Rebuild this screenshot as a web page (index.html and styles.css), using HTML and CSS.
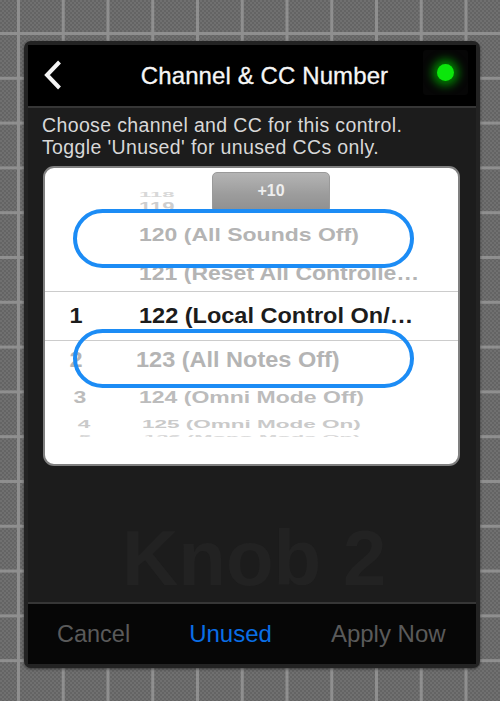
FILE: index.html
```html
<!DOCTYPE html>
<html lang="en">
<head>
<meta charset="utf-8">
<title>Channel &amp; CC Number</title>
<link rel="stylesheet" href="styles.css">
</head>
<body>
<main class="panel">
  <header class="header">
    <svg class="back" width="20" height="32" viewBox="0 0 20 32" aria-hidden="true"><path d="M16.5 3 L4 16 L16.5 29" fill="none" stroke="#f4f4f4" stroke-width="4"/></svg>
    <h1 class="title">Channel &amp; CC Number</h1>
    <span class="led-box"><span class="led"></span></span>
  </header>
  <section class="content">
    <p class="hint">Choose channel and CC for this control.<br>Toggle 'Unused' for unused CCs only.</p>
    <div class="picker">
      <div class="wheel">
        <div class="row row-118"><span class="num"></span><span class="label">118</span></div>
        <div class="row row-119"><span class="num"></span><span class="label">119</span></div>
        <div class="row row-120"><span class="num"></span><span class="label">120 (All Sounds Off)</span></div>
        <div class="row row-121"><span class="num"></span><span class="label">121 (Reset All Controllers)</span></div>
        <div class="row row-122"><span class="num">1</span><span class="label">122 (Local Control On/Off)</span></div>
        <div class="row row-123"><span class="num">2</span><span class="label">123 (All Notes Off)</span></div>
        <div class="row row-124"><span class="num">3</span><span class="label">124 (Omni Mode Off)</span></div>
        <div class="row row-125"><span class="num">4</span><span class="label">125 (Omni Mode On)</span></div>
        <div class="row row-126"><span class="num">5</span><span class="label">126 (Mono Mode On)</span></div>
      </div>
      <button class="plus">+10</button>
      <span class="oval oval-a"></span>
      <span class="oval oval-b"></span>
    </div>
    <div class="ghost">Knob 2</div>
  </section>
  <footer class="footer">
    <span class="action">Cancel</span>
    <span class="action action-on">Unused</span>
    <span class="action action-apply">Apply Now</span>
  </footer>
</main>
</body>
</html>
```

FILE: styles.css
```css
* { box-sizing: border-box; }
html, body { margin: 0; height: 701px; overflow: hidden; }
body {
  padding: 41px 20px 0 24px;
  font-family: "Liberation Sans", Arial, sans-serif;
  background-color: #6a6a6a;
  background-image:
    linear-gradient(90deg, #8f8f8f 3px, transparent 3px),
    linear-gradient(#8f8f8f 3px, transparent 3px),
    conic-gradient(#646464 25%, #707070 0 50%, #646464 0 75%, #707070 0);
  background-size: 44.75px 100%, 100% 44.8px, 4px 4px;
  background-position: 17px 0, 0 32px, 0 0;
}
.panel {
  width: 456px;
  height: 627px;
  border: 4px solid #232323;
  border-radius: 7px;
  background: #1c1c1c;
  display: flex;
  flex-direction: column;
  box-shadow: 0 1px 3px rgba(0,0,0,.5);
}
.header {
  height: 63px;
  flex: none;
  background: #000;
  border-bottom: 2px solid #363636;
  display: flex;
  align-items: center;
  justify-content: center;
  position: relative;
}
.back { position: absolute; left: 15px; top: 14px; }
.title { margin: 0 0 0 25px; color: #f6f6f6; font-size: 24px; font-weight: 400; letter-spacing: .1px; -webkit-text-stroke: .3px #f6f6f6; }
.led-box {
  position: absolute;
  left: 395px;
  top: 5px;
  width: 45px;
  height: 45px;
  border-radius: 3px;
  background: #060606;
  display: flex;
  align-items: center;
  justify-content: center;
}
.led {
  width: 17px;
  height: 17px;
  border-radius: 50%;
  background: #0be60b;
  box-shadow: 0 0 9px 5px rgba(0,170,0,.7);
}
.content { flex: 1; display: flex; flex-direction: column; min-height: 0; }
.hint { margin: 6px 0 0 14px; color: #d8d8d8; font-size: 19.5px; letter-spacing: .37px; line-height: 22px; height: 44px; white-space: nowrap; }
.picker {
  position: relative;
  margin: 8px 0 0 15px;
  width: 417px;
  height: 300px;
  flex: none;
  background: #fff;
  border: 2px solid #808080;
  border-radius: 11px;
}
.wheel { margin: 24px 0 0; height: 245px; overflow: hidden; }
.row {
  display: flex;
  align-items: center;
  color: #b4b4b4;
  font-weight: 700;
  white-space: nowrap;
}
.num { width: 94px; flex: none; text-align: center; padding-right: 32px; }
.label { width: 276px; overflow: hidden; text-overflow: ellipsis; }
.row-118 { height: 6px; font-size: 22px; color: #d8d8d8; transform: scaleY(.3); }
.row-119 { height: 18px; font-size: 22px; color: #cecece; transform: scaleY(.55); }
.row-120 { height: 36px; font-size: 23px; transform: scaleY(.82); }
.row-121 { height: 39px; font-size: 23px; padding-top: 3px; transform: scaleY(.85); }
.row-121 .label { width: 285px; }
.row-122 { height: 50px; color: #1c1c1c; font-size: 23.5px; border-top: 1px solid #ccc; border-bottom: 1px solid #ccc; }
.row-122 span { transform: scaleY(.93); }
.row-123 { height: 38px; font-size: 23.5px; transform: scaleY(.9); }
.row-123 .label { margin-left: -3px; }
.row-124 { height: 36px; font-size: 23px; color: #bcbcbc; transform: scaleY(.72); }
.row-124 .num { padding-right: 24px; }
.row-125 { height: 19px; font-size: 22.5px; color: #cacaca; transform: scaleY(.5); }
.row-125 .label { padding-left: 3px; }
.row-125 .num { padding-right: 16px; }
.row-126 { height: 8px; font-size: 22px; color: #d8d8d8; transform: scaleY(.3); }
.row-126 .label { padding-left: 5px; }
.row-126 .num { padding-right: 14px; }
.plus {
  position: absolute;
  left: 167px;
  top: 4px;
  width: 118px;
  height: 41px;
  padding: 0 0 3px;
  border: 1px solid #9a9a9a;
  border-radius: 5px;
  background: linear-gradient(#b4b4b4, #9c9c9c 55%, #8f8f8f);
  color: #eeeeee;
  font: 700 16px "Liberation Sans", Arial, sans-serif;
}
.oval {
  position: absolute;
  left: 28px;
  width: 341px;
  border: 4px solid #1c8cf5;
  border-radius: 30px;
}
.oval-a { top: 41px; height: 59px; }
.oval-b { top: 161px; height: 59px; }
.ghost {
  margin: 47px 0 0 94px;
  color: #222222;
  font-size: 78px;
  font-weight: 700;
  line-height: 90px;
}
.footer {
  height: 62px;
  flex: none;
  background: #060606;
  border-top: 2px solid #363636;
  display: flex;
  align-items: center;
}
.action { color: #5a5a5a; font-size: 23.5px; }
.action:nth-child(1) { margin-left: 29px; }
.action:nth-child(2) { margin-left: 59px; }
.action:nth-child(3) { margin-left: 59px; }
.action-on { color: #0a6ee6; font-size: 24px; }
.action-apply { font-size: 24px; }
```
